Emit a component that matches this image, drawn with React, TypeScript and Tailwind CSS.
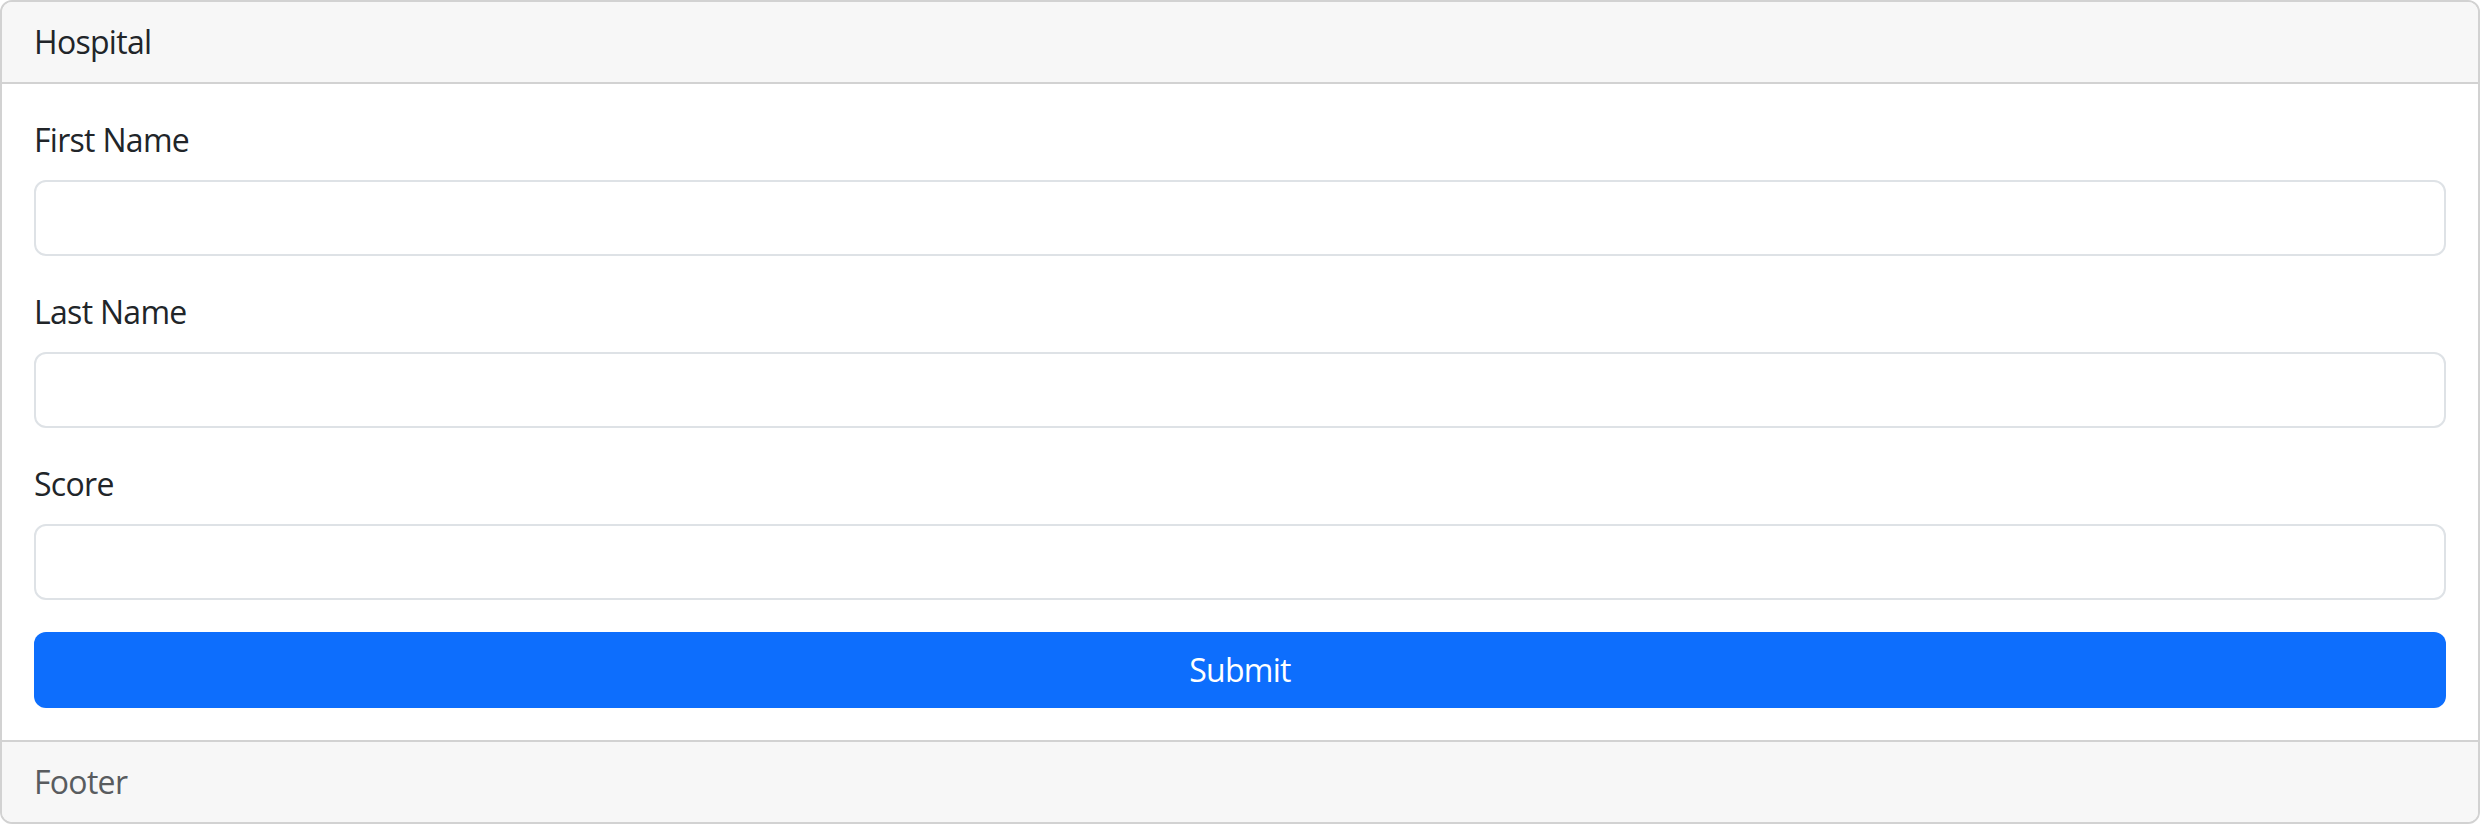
import React from "react";

const font = { fontFamily: '"Open Sans", "Noto Sans", "Liberation Sans", sans-serif' };

function Field({ label }: { label: string }) {
  return (
    <div className="mb-[32px]">
      <label className="block mb-[16px] text-[32px] leading-[48px] tracking-[-0.7px] text-[#212529]">{label}</label>
      <input
        type="text"
        className="block w-full h-[76px] px-[24px] py-[12px] text-[32px] leading-[48px] bg-white border-2 border-[#dee2e6] rounded-[12px] outline-none"
      />
    </div>
  );
}

export default function App() {
  return (
    <div className="w-[2480px] h-[824px] bg-white" style={font}>
      <div className="flex flex-col h-[824px] border-2 border-[#d2d2d2] rounded-[12px] overflow-hidden">
        <div className="h-[82px] px-[32px] py-[16px] bg-[#f7f7f7] border-b-2 border-[#d2d2d2] text-[32px] leading-[48px] tracking-[-0.7px] text-[#212529]">
          Hospital
        </div>
        <div className="flex-1 p-[32px]">
          <Field label="First Name" />
          <Field label="Last Name" />
          <Field label="Score" />
          <button className="block w-full h-[76px] bg-[#0d6efd] text-white text-[32px] leading-[48px] tracking-[-0.7px] rounded-[12px]">
            Submit
          </button>
        </div>
        <div className="h-[82px] px-[32px] py-[16px] bg-[#f7f7f7] border-t-2 border-[#d2d2d2] text-[32px] leading-[48px] tracking-[-0.7px] text-[#595c5f]">
          Footer
        </div>
      </div>
    </div>
  );
}
